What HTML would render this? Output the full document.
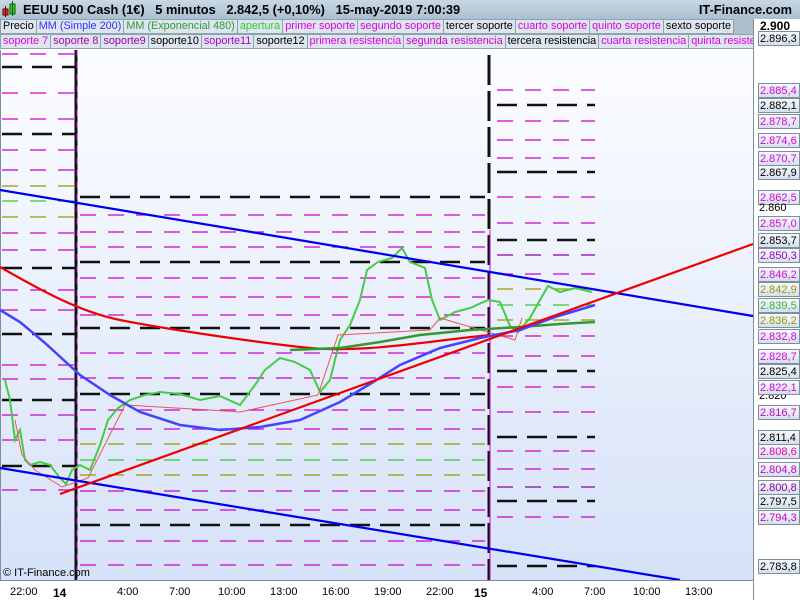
<!DOCTYPE html>
<html><head><meta charset="utf-8"><style>
body{margin:0;width:800px;height:600px;overflow:hidden;font-family:"Liberation Sans",sans-serif;background:#fff;position:relative}
#top{position:absolute;left:0;top:0;width:800px;height:19px;background:linear-gradient(#c9d8e4,#a9bfcf);font-size:12.8px;font-weight:bold}
.row{position:absolute;left:0;height:15px;width:753px;background:#aebfcb;font-size:10.85px;white-space:nowrap;overflow:hidden}
.row span{display:inline-block;height:13px;line-height:13px;padding:0 2px;background:#dde6ee;border:1px solid #8ea3b0;margin-right:-1px}
.ax{position:absolute;left:758px;width:42px;height:15px;font-size:11px;line-height:14px;padding-left:1px;background:linear-gradient(#f5f8fc,#d5e0ee);border:1px solid #7d8f9c;box-sizing:border-box;white-space:nowrap;overflow:hidden}
.tl{position:absolute;font-size:11px;top:586px}
</style></head><body>
<div id="top">
<svg style="position:absolute;left:2px;top:1px" width="16" height="17"><rect x="1" y="8" width="5" height="6" fill="#d33" stroke="#600"/><rect x="8" y="3" width="5" height="10" fill="#3c3" stroke="#060"/><line x1="3.5" y1="5" x2="3.5" y2="16" stroke="#600"/><line x1="10.5" y1="0" x2="10.5" y2="15" stroke="#060"/></svg>
<span style="position:absolute;left:23px;top:2px">EEUU 500 Cash (1€) &nbsp; 5 minutos &nbsp; 2.842,5 (+0,10%) &nbsp; 15-may-2019 7:00:39</span>
<span style="position:absolute;right:8px;top:2px">IT-Finance.com</span>
</div>
<div class="row" style="top:19px"><span>Precio</span><span style="color:#33f">MM (Simple 200)</span><span style="color:#393">MM (Exponencial 480)</span><span style="color:#3c3">apertura</span><span style="color:#d0d">primer soporte</span><span style="color:#d0d">segundo soporte</span><span>tercer soporte</span><span style="color:#d0d">cuarto soporte</span><span style="color:#d0d">quinto soporte</span><span>sexto soporte</span></div>
<div class="row" style="top:34px"><span style="color:#d0d">soporte 7</span><span style="color:#a0a">soporte 8</span><span style="color:#90a">soporte9</span><span>soporte10</span><span style="color:#a0c">soporte11</span><span>soporte12</span><span style="color:#d0d">primera resistencia</span><span style="color:#c0c">segunda resistencia</span><span>tercera resistencia</span><span style="color:#d0d">cuarta resistencia</span><span style="color:#d0d">quinta resistencia</span></div>
<div style="position:absolute;left:753px;top:19px;width:47px;height:581px;background:#fff;border-left:1px solid #7d8f9c"></div>
<div style="position:absolute;left:760px;top:19px;font-size:12px;font-weight:bold">2.900</div>
<svg style="position:absolute;left:0;top:50px" width="753" height="530" viewBox="0 50 753 530">
<defs><linearGradient id="g" x1="0" y1="0" x2="0" y2="1"><stop offset="0" stop-color="#fcfdff"/><stop offset="1" stop-color="#d6e2f8"/></linearGradient></defs>
<rect x="0" y="50" width="753" height="530" fill="url(#g)"/>
<line x1="0.5" y1="50" x2="0.5" y2="580" stroke="#7d8f9c"/>
<g stroke-width="1.2" stroke-dasharray="16,12" fill="none">
<g stroke="#c0c">
<path d="M2 54H75M2 93H75M2 119H75M2 150H75M2 170H75M2 233H75M2 250H75M2 290H75M2 310H75M2 365H75M2 379H75M2 415H75M2 440H75M2 490H75"/>
<path d="M80 215H485M80 232H485M80 247H485M80 278H485M80 297H485M80 315H485M80 353H485M80 378H485M80 410H485M80 429H485M80 491H485M80 510H485M80 541H485M80 565H485"/>
<path d="M497 90H595M497 121H595M497 140H595M497 158H595M497 197H595M497 223H595M497 274H595M497 336H595M497 356H595M497 387H595M497 412H595M497 451H595M497 469H595M497 517H595"/>
<path stroke="#80a" d="M497 255H595M497 487H595"/>
</g>
<g stroke="#990"><path d="M2 186H75M2 217H75M80 444H485M80 475H485M497 289H595M497 320H595"/></g>
<g stroke="#3c3"><path d="M2 201H75M80 460H485M497 305H595"/></g>
<g stroke="#111" stroke-width="2.5" stroke-dasharray="20,10">
<path d="M2 67H75M2 134H75M2 268H75M2 334H75M2 400H75M2 466H75"/>
<path d="M80 197H485M80 262H485M80 328H485M80 394H485M80 525H485"/>
<path d="M497 105H595M497 172H595M497 240H595M497 371H595M497 437H595M497 501H595M497 566H595"/>
</g>
</g>
<line x1="76" y1="50" x2="76" y2="580" stroke="#111" stroke-width="3"/>
<line x1="77" y1="50" x2="77" y2="580" stroke="#c0c" stroke-width="1" stroke-dasharray="6,6"/>
<line x1="489" y1="55" x2="489" y2="580" stroke="#111" stroke-width="3" stroke-dasharray="30,6"/>
<line x1="490" y1="230" x2="490" y2="580" stroke="#c0c" stroke-width="1"/>
<polyline fill="none" stroke="#4c4" stroke-width="2" points="5,380 10,400 15,440 20,430 25,460 30,465 40,462 50,465 60,478 66,484 72,470 80,465 90,470 100,445 108,420 118,408 130,400 145,395 160,392 180,394 200,400 220,396 240,405 255,385 265,370 280,358 295,362 310,370 320,392 330,380 340,340 350,325 360,300 367,270 378,262 392,258 402,248 410,262 425,268 432,300 440,320 455,312 470,308 488,300 500,302 510,326 518,332 530,318 540,300 548,286 560,292 575,288 592,292"/>
<polyline fill="none" stroke="#e55" stroke-width="1" points="15,420 22,455 35,470 62,487 88,478 125,405 210,410 240,412 318,395 338,335 430,330 440,318 515,340 522,318"/>
<line x1="0" y1="190" x2="753" y2="316" stroke="#00e" stroke-width="2.2"/>
<line x1="0" y1="468" x2="680" y2="580" stroke="#00e" stroke-width="2.2"/>
<path fill="none" stroke="#e00" stroke-width="2.2" d="M0 267C40 290 80 312 120 320S240 340 300 347S420 342 490 335"/>
<polyline fill="none" stroke="#393" stroke-width="2.5" points="290,350 340,348 380,342 420,335 470,330 520,327 560,324 595,322"/>
<polyline fill="none" stroke="#44f" stroke-width="2.5" points="0,310 20,322 45,343 80,375 110,395 140,412 180,425 220,430 260,427 300,420 340,402 370,384 400,365 440,348 480,338 520,330 555,317 595,305"/>
<line x1="60" y1="494" x2="753" y2="244" stroke="#e00" stroke-width="2.2"/>
</svg>
<div style="position:absolute;left:3px;top:567px;font-size:11px">© IT-Finance.com</div>
<div style="position:absolute;left:0;top:580px;width:753px;height:20px;background:#fff;border-top:1px solid #7d8f9c"></div>
<div class="tl" style="left:10px">22:00</div><div class="tl" style="left:53px;font-weight:bold;font-size:12px">14</div>
<div class="tl" style="left:117px">4:00</div><div class="tl" style="left:169px">7:00</div><div class="tl" style="left:218px">10:00</div><div class="tl" style="left:270px">13:00</div><div class="tl" style="left:322px">16:00</div><div class="tl" style="left:374px">19:00</div><div class="tl" style="left:426px">22:00</div><div class="tl" style="left:474px;font-weight:bold;font-size:12px">15</div><div class="tl" style="left:532px">4:00</div><div class="tl" style="left:584px">7:00</div><div class="tl" style="left:633px">10:00</div><div class="tl" style="left:685px">13:00</div>
<div class="ax" style="top:31px">2.896,3</div>
<div class="ax" style="top:83px;color:#d0d">2.885,4</div>
<div class="ax" style="top:98px">2.882,1</div>
<div class="ax" style="top:114px;color:#d0d">2.878,7</div>
<div class="ax" style="top:133px;color:#d0d">2.874,6</div>
<div class="ax" style="top:151px;color:#d0d">2.870,7</div>
<div class="ax" style="top:165px">2.867,9</div>
<div class="ax" style="top:190px;color:#d0d">2.862,5</div>
<div style="position:absolute;left:759px;top:202px;font-size:11px">2.860</div>
<div class="ax" style="top:216px;color:#d0d">2.857,0</div>
<div class="ax" style="top:233px">2.853,7</div>
<div class="ax" style="top:248px;color:#90c">2.850,3</div>
<div class="ax" style="top:267px;color:#d0d">2.846,2</div>
<div class="ax" style="top:282px;color:#990">2.842,9</div>
<div class="ax" style="top:298px;color:#3b3">2.839,5</div>
<div class="ax" style="top:313px;color:#990">2.836,2</div>
<div class="ax" style="top:329px;color:#d0d">2.832,8</div>
<div class="ax" style="top:349px;color:#d0d">2.828,7</div>
<div class="ax" style="top:364px">2.825,4</div>
<div style="position:absolute;left:759px;top:390px;font-size:11px">2.820</div>
<div class="ax" style="top:380px;color:#d0d">2.822,1</div>
<div class="ax" style="top:405px;color:#c0c">2.816,7</div>
<div class="ax" style="top:430px">2.811,4</div>
<div class="ax" style="top:444px;color:#e0a">2.808,6</div>
<div class="ax" style="top:462px;color:#c0c">2.804,8</div>
<div class="ax" style="top:480px;color:#80a">2.800,8</div>
<div class="ax" style="top:494px">2.797,5</div>
<div class="ax" style="top:510px;color:#c0c">2.794,3</div>
<div class="ax" style="top:559px">2.783,8</div>
</body></html>
